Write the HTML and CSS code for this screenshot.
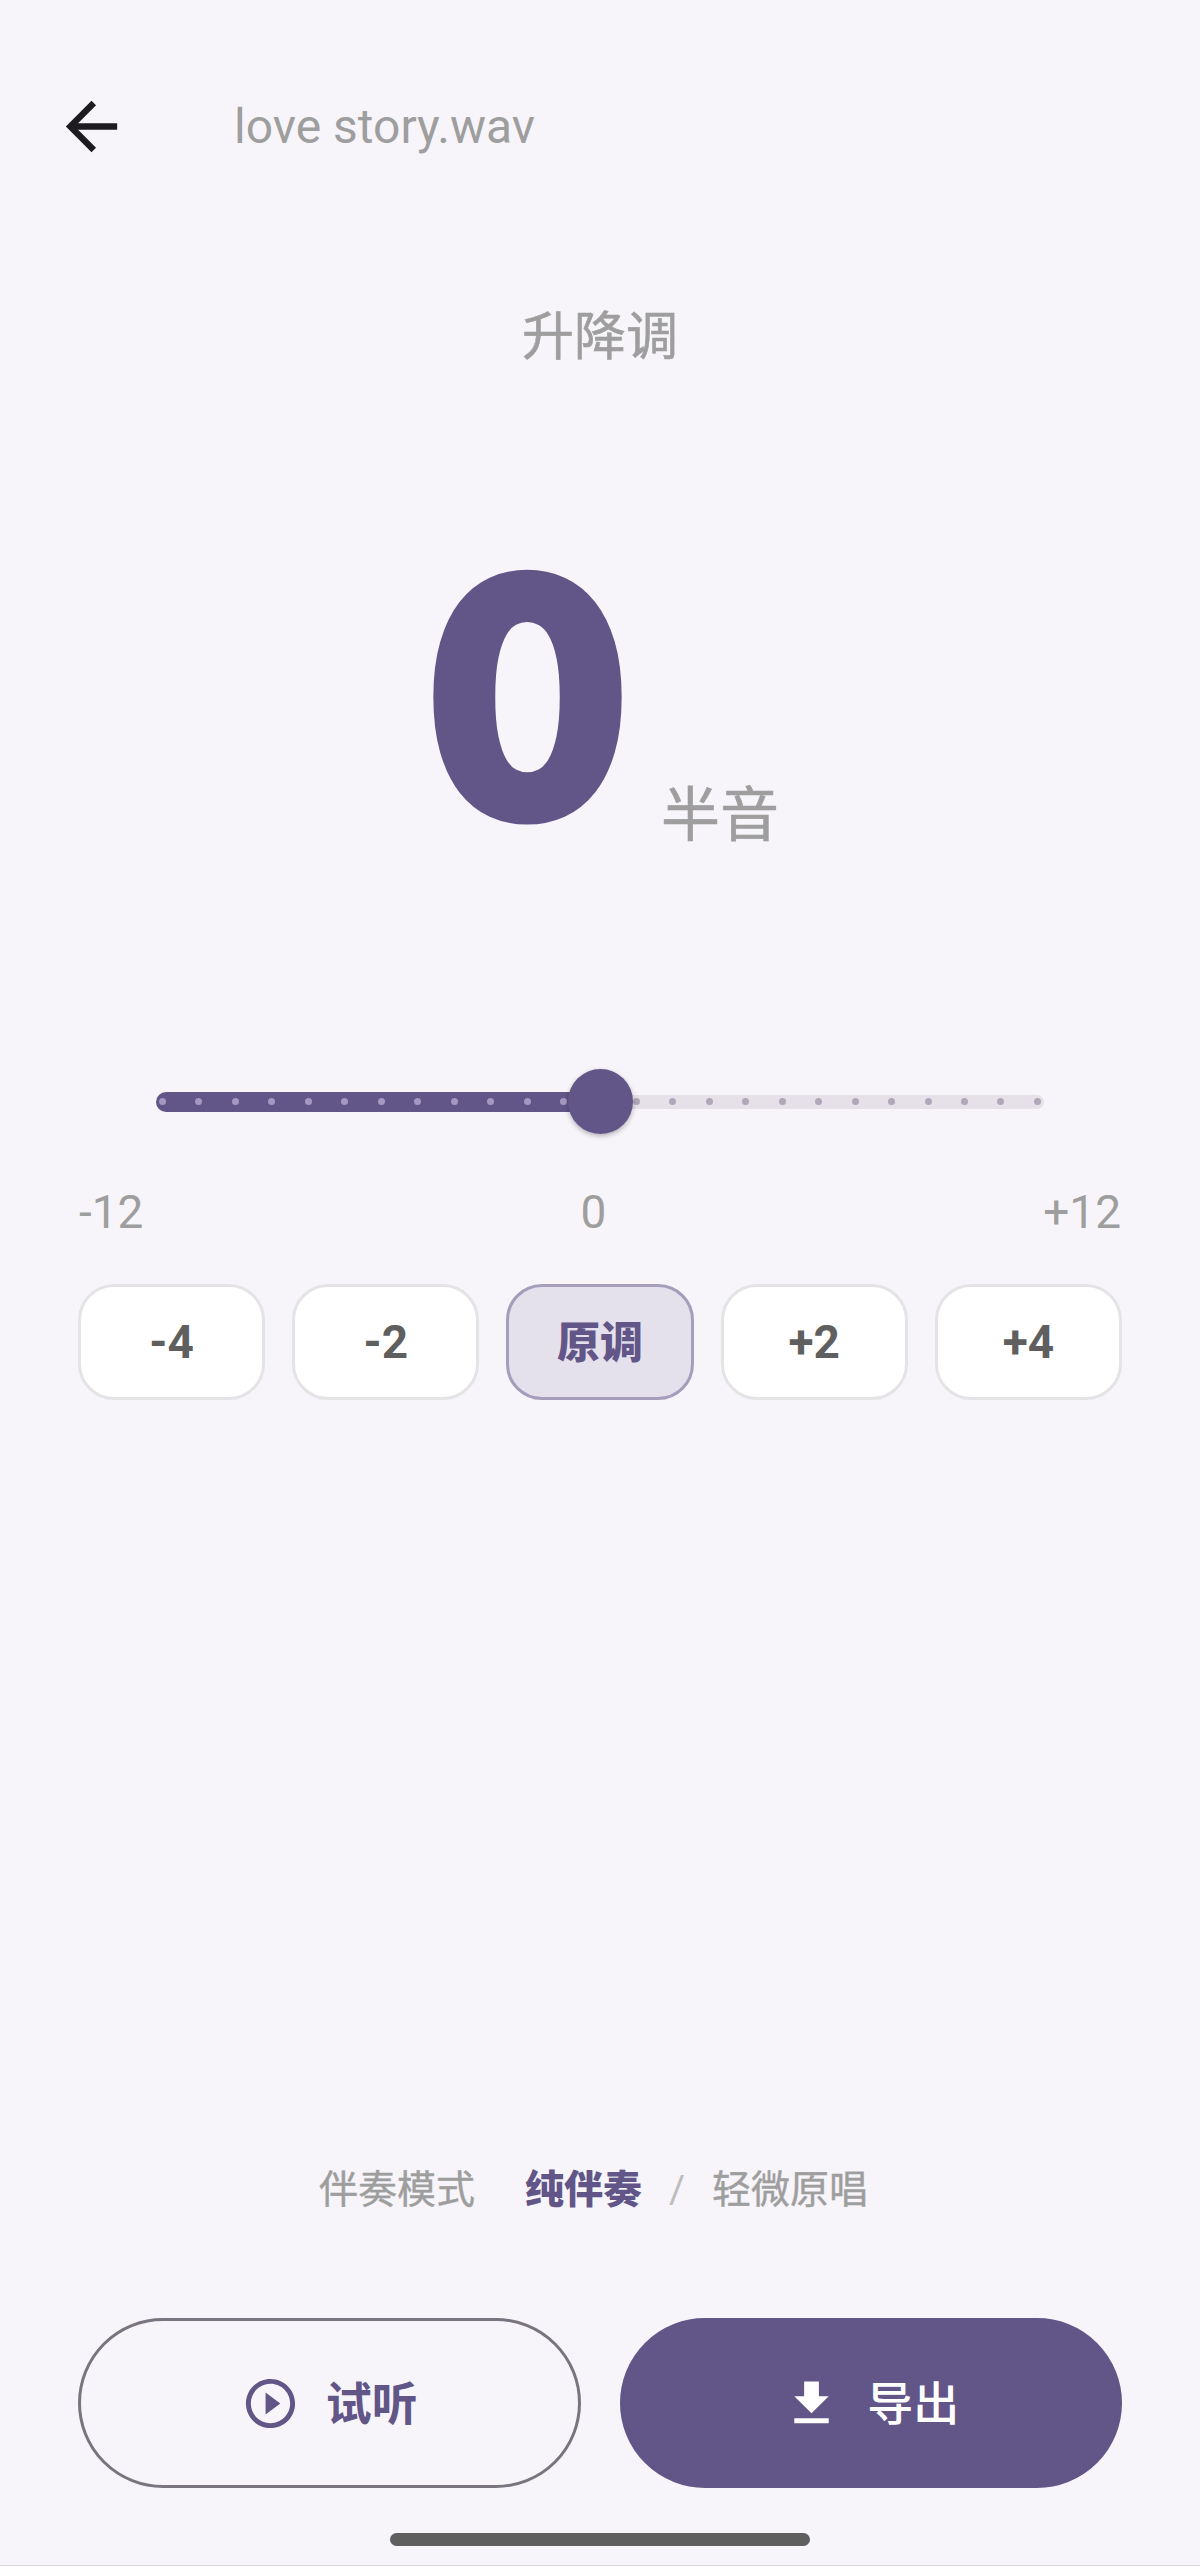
FILE: index.html
```html
<!DOCTYPE html>
<html lang="zh-CN">
<head>
    <meta charset="UTF-8">
    <meta name="viewport" content="width=device-width, initial-scale=1.0">
    <title>升降调</title>
    <link rel="stylesheet" href="styles.css">
</head>
<body>
    <div class="app">
        <header class="top-bar">
            <svg class="back-icon" viewBox="0 0 24 24"><path d="M20 11H7.83l5.59-5.59L12 4l-8 8 8 8 1.41-1.41L7.83 13H20v-2z"/></svg>
            <span class="file-name">love story.wav</span>
        </header>

        <h1 class="page-title">升降调</h1>

        <div class="value-row">
            <span class="value">0</span>
            <span class="unit">半音</span>
        </div>

        <div class="slider">
            <div class="track-on"></div>
            <div class="track-off"></div>
            <div class="ticks">
                <i class="on"></i><i class="on"></i><i class="on"></i><i class="on"></i><i class="on"></i><i class="on"></i>
                <i class="on"></i><i class="on"></i><i class="on"></i><i class="on"></i><i class="on"></i><i class="on"></i>
                <i></i>
                <i></i><i></i><i></i><i></i><i></i><i></i>
                <i></i><i></i><i></i><i></i><i></i><i></i>
            </div>
            <div class="thumb"></div>
        </div>

        <div class="range-labels">
            <span>-12</span>
            <span>0</span>
            <span>+12</span>
        </div>

        <div class="presets">
            <button class="preset">-4</button>
            <button class="preset">-2</button>
            <button class="preset selected">原调</button>
            <button class="preset">+2</button>
            <button class="preset">+4</button>
        </div>

        <div class="mode-row">
            <span class="mode-label">伴奏模式</span>
            <span class="mode-active">纯伴奏</span>
            <span class="mode-sep">/</span>
            <span class="mode-other">轻微原唱</span>
        </div>

        <div class="actions">
            <button class="action outline">
                <svg class="action-icon" viewBox="0 0 24 24"><path d="M10 16.5l6-4.5-6-4.5v9zM12 2C6.48 2 2 6.48 2 12s4.48 10 10 10 10-4.48 10-10S17.52 2 12 2zm0 18c-4.41 0-8-3.59-8-8s3.59-8 8-8 8 3.59 8 8-3.59 8-8 8z"/></svg>
                <span>试听</span>
            </button>
            <button class="action filled">
                <svg class="action-icon" viewBox="0 0 24 24"><path d="M19 9h-4V3H9v6H5l7 7 7-7zM5 18v2h14v-2H5z"/></svg>
                <span>导出</span>
            </button>
        </div>

        <div class="home-bar"></div>
    </div>
</body>
</html>
```

FILE: styles.css
```css
* {
    box-sizing: border-box;
}
body {
    margin: 0;
    background-color: #f7f5fa;
    font-family: Roboto, "Noto Sans CJK SC", sans-serif;
    color: #9e9e9e;
}
.app {
    display: flex;
    flex-direction: column;
    height: 2566px;
    padding: 88px 78px 19px;
    border-bottom: 1px solid #d9d8dc;
}

/* header */
.top-bar {
    display: flex;
    align-items: center;
    gap: 104px;
    height: 77px;
    margin-left: -25px;
}
.back-icon {
    width: 77px;
    height: 77px;
    fill: #1d1b20;
}
.file-name {
    font-size: 48px;
    line-height: 60px;
}
.page-title {
    margin: 143px 0 0;
    font-size: 52px;
    font-weight: 400;
    line-height: 60px;
    text-align: center;
    -webkit-text-stroke: 0.6px #9e9e9e;
}

/* big number */
.value-row {
    display: flex;
    justify-content: center;
    align-items: flex-end;
    gap: 40px;
    margin-top: 172px;
    padding-left: 13px;
}
.value {
    font-family: Lato, sans-serif;
    font-size: 322px;
    font-weight: 900;
    line-height: 300px;
    color: #625587;
    -webkit-text-stroke: 16px #625587; /* Lato Black is not heavy enough */
}
.unit {
    margin-bottom: -6px;
    font-size: 59px;
    line-height: 60px;
    -webkit-text-stroke: 0.6px #9e9e9e;
}

/* slider */
.slider {
    position: relative;
    display: flex;
    align-items: center;
    height: 65px;
    margin: 229px 78px 0;
}
.track-on {
    width: 445px;
    height: 20px;
    border-radius: 10px 0 0 10px;
    background-color: #625587;
}
.track-off {
    flex: 1;
    height: 14px;
    border-radius: 0 7px 7px 0;
    background-color: #e6e0e9;
}
.ticks {
    position: absolute;
    left: 3px;
    right: 3px;
    top: 29px;
    display: flex;
    justify-content: space-between;
}
.ticks i {
    width: 7px;
    height: 7px;
    border-radius: 50%;
    background-color: #b0a8b8;
}
.ticks i.on {
    background-color: #a498c2;
}
.thumb {
    position: absolute;
    left: 412px;
    top: 0;
    width: 65px;
    height: 65px;
    border-radius: 50%;
    background-color: #625587;
    box-shadow: 0 2px 5px rgba(0, 0, 0, 0.28);
}
.range-labels {
    display: flex;
    justify-content: space-between;
    margin-top: 48px;
    padding: 0 1px;
    font-size: 46px;
    line-height: 60px;
}

/* preset buttons */
.presets {
    display: flex;
    gap: 27px;
    margin-top: 42px;
}
.preset {
    flex: 1;
    height: 116px;
    padding: 0;
    border: 3px solid #e4e4e6;
    border-radius: 36px;
    background-color: #fff;
    color: #5f5f5f;
    font-family: inherit;
    font-size: 46px;
    font-weight: 700;
}
.preset.selected {
    padding-bottom: 6px;
    border-color: #a69dbb;
    background-color: #e4e0ec;
    color: #625587;
    font-size: 43px;
    font-weight: 900;
}

/* mode switch */
.mode-row {
    display: flex;
    justify-content: center;
    align-items: center;
    margin-top: auto;
    padding-right: 13px;
    font-size: 39px;
    line-height: 50px;
    -webkit-text-stroke: 0.4px #9e9e9e;
}
.mode-active {
    margin-left: 50px;
    color: #625587;
    font-weight: 900;
    -webkit-text-stroke: 0;
}
.mode-sep {
    margin: 0 27px;
    color: #bdbdbd;
    -webkit-text-stroke: 0;
}

/* bottom buttons */
.actions {
    display: flex;
    gap: 39px;
    margin-top: 103px;
}
.action {
    flex: 1;
    display: flex;
    justify-content: center;
    align-items: center;
    gap: 26px;
    height: 170px;
    padding: 0;
    border: 3px solid #625587;
    border-radius: 85px;
    font-family: inherit;
    font-size: 46px;
    font-weight: 700;
}
.action span {
    padding-bottom: 6px;
}
.action-icon {
    width: 59px;
    height: 59px;
    fill: currentColor;
}
.outline {
    border-color: #79747e;
    background: none;
    color: #625587;
}
.filled {
    background-color: #625587;
    color: #fff;
    font-weight: 500;
}
.home-bar {
    align-self: center;
    width: 420px;
    height: 13px;
    margin-top: 45px;
    border-radius: 7px;
    background-color: #5f5f5f;
}
```
